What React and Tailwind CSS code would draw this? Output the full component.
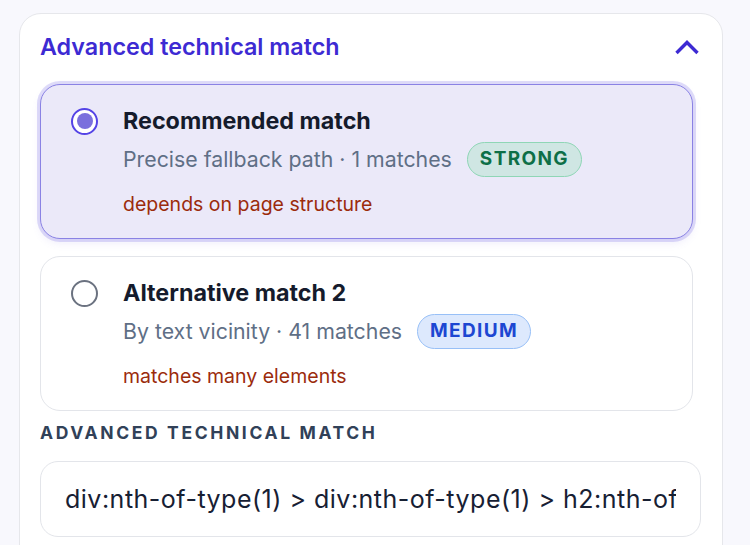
const options = [
    {
        title: 'Recommended match',
        detail: 'Precise fallback path · 1 matches',
        badge: 'STRONG',
        note: 'depends on page structure',
        selected: true,
    },
    {
        title: 'Alternative match 2',
        detail: 'By text vicinity · 41 matches',
        badge: 'MEDIUM',
        note: 'matches many elements',
        selected: false,
    },
];

const badgeStyles = {
    STRONG: 'bg-[#cfe6e3] border-[#8fd6b6] text-[#0d6f47]',
    MEDIUM: 'bg-[#dde9fd] border-[#98c0f7] text-[#1d47d2]',
};

const ChevronUp = () => (
    <svg width="26" height="17" viewBox="0 0 26 17" fill="none" className="text-[#3d2ad3]">
        <polyline points="2.5,14 13,3.5 23.5,14" stroke="currentColor" strokeWidth="3.4" strokeLinejoin="miter" />
    </svg>
);

const Radio = ({ checked }) =>
    checked ? (
        <span className="w-[27px] h-[27px] rounded-full border-[2.5px] border-[#5443e6] bg-white flex items-center justify-center flex-shrink-0">
            <span className="w-[16px] h-[16px] rounded-full bg-[#7a6fdd]" />
        </span>
    ) : (
        <span className="w-[27px] h-[27px] rounded-full border-2 border-[#6b7280] bg-white flex-shrink-0" />
    );

const OptionCard = ({ title, detail, badge, note, selected }) => (
    <div
        className={`flex gap-[25px] pl-[30px] pt-[22px] pb-[22px] rounded-[20px] border-[1.5px] ${
            selected
                ? 'bg-[#ebe9f9] border-[#8a82e4] shadow-[0_0_0_3px_rgba(140,130,235,0.28),0_4px_8px_rgba(120,110,220,0.12)]'
                : 'bg-white border-[#e3e5ea]'
        }`}
    >
        <div className="h-[28px] flex items-center">
            <Radio checked={selected} />
        </div>
        <div className="flex flex-col">
            <p className="text-[23.3px] leading-[28px] font-bold text-[#151b2c]">{title}</p>
            <div className="flex items-center gap-[15px] mt-[7px]">
                <span className="text-[21.3px] text-[#5f6f86]">{detail}</span>
                <span
                    className={`h-[35px] px-[12px] rounded-full border-[1.5px] flex items-center text-[19px] font-bold tracking-[0.07em] ${badgeStyles[badge]}`}
                >
                    {badge}
                </span>
            </div>
            <p className="mt-[15px] text-[19.5px] leading-[24px] text-[#9b2b0c]">{note}</p>
        </div>
    </div>
);

export default function App() {
    return (
        <div className="min-h-screen bg-[#f8f8fd] pl-[19px] pr-[27px] pt-[13px] font-['Inter',sans-serif] overflow-hidden">
            <div className="rounded-t-[22px] border border-[#e6e7eb] bg-white pl-[20px] pr-[21px] pt-[19px] pb-[14px]">
                {/* Header */}
                <div className="flex items-center justify-between h-[28px] pr-[1px]">
                    <h2 className="text-[23.3px] font-semibold text-[#3d2ad3]">Advanced technical match</h2>
                    <ChevronUp />
                </div>

                {/* Options */}
                <div className="mt-[23px] pr-[8px] flex flex-col gap-[17px]">
                    {options.map((opt) => (
                        <OptionCard key={opt.title} {...opt} />
                    ))}
                </div>

                {/* Raw selector */}
                <p className="mt-[11px] text-[17.5px] leading-[22px] font-bold uppercase tracking-[0.15em] text-[#314158]">
                    Advanced technical match
                </p>
                <input
                    readOnly
                    value="div:nth-of-type(1) > div:nth-of-type(1) > h2:nth-of-type(1)"
                    className="mt-[17px] w-full h-[76px] px-[24px] rounded-[18px] border-[1.5px] border-[#e3e5ea] bg-white text-[25px] tracking-[0.02em] text-[#172033] outline-none"
                />
            </div>
        </div>
    );
}
